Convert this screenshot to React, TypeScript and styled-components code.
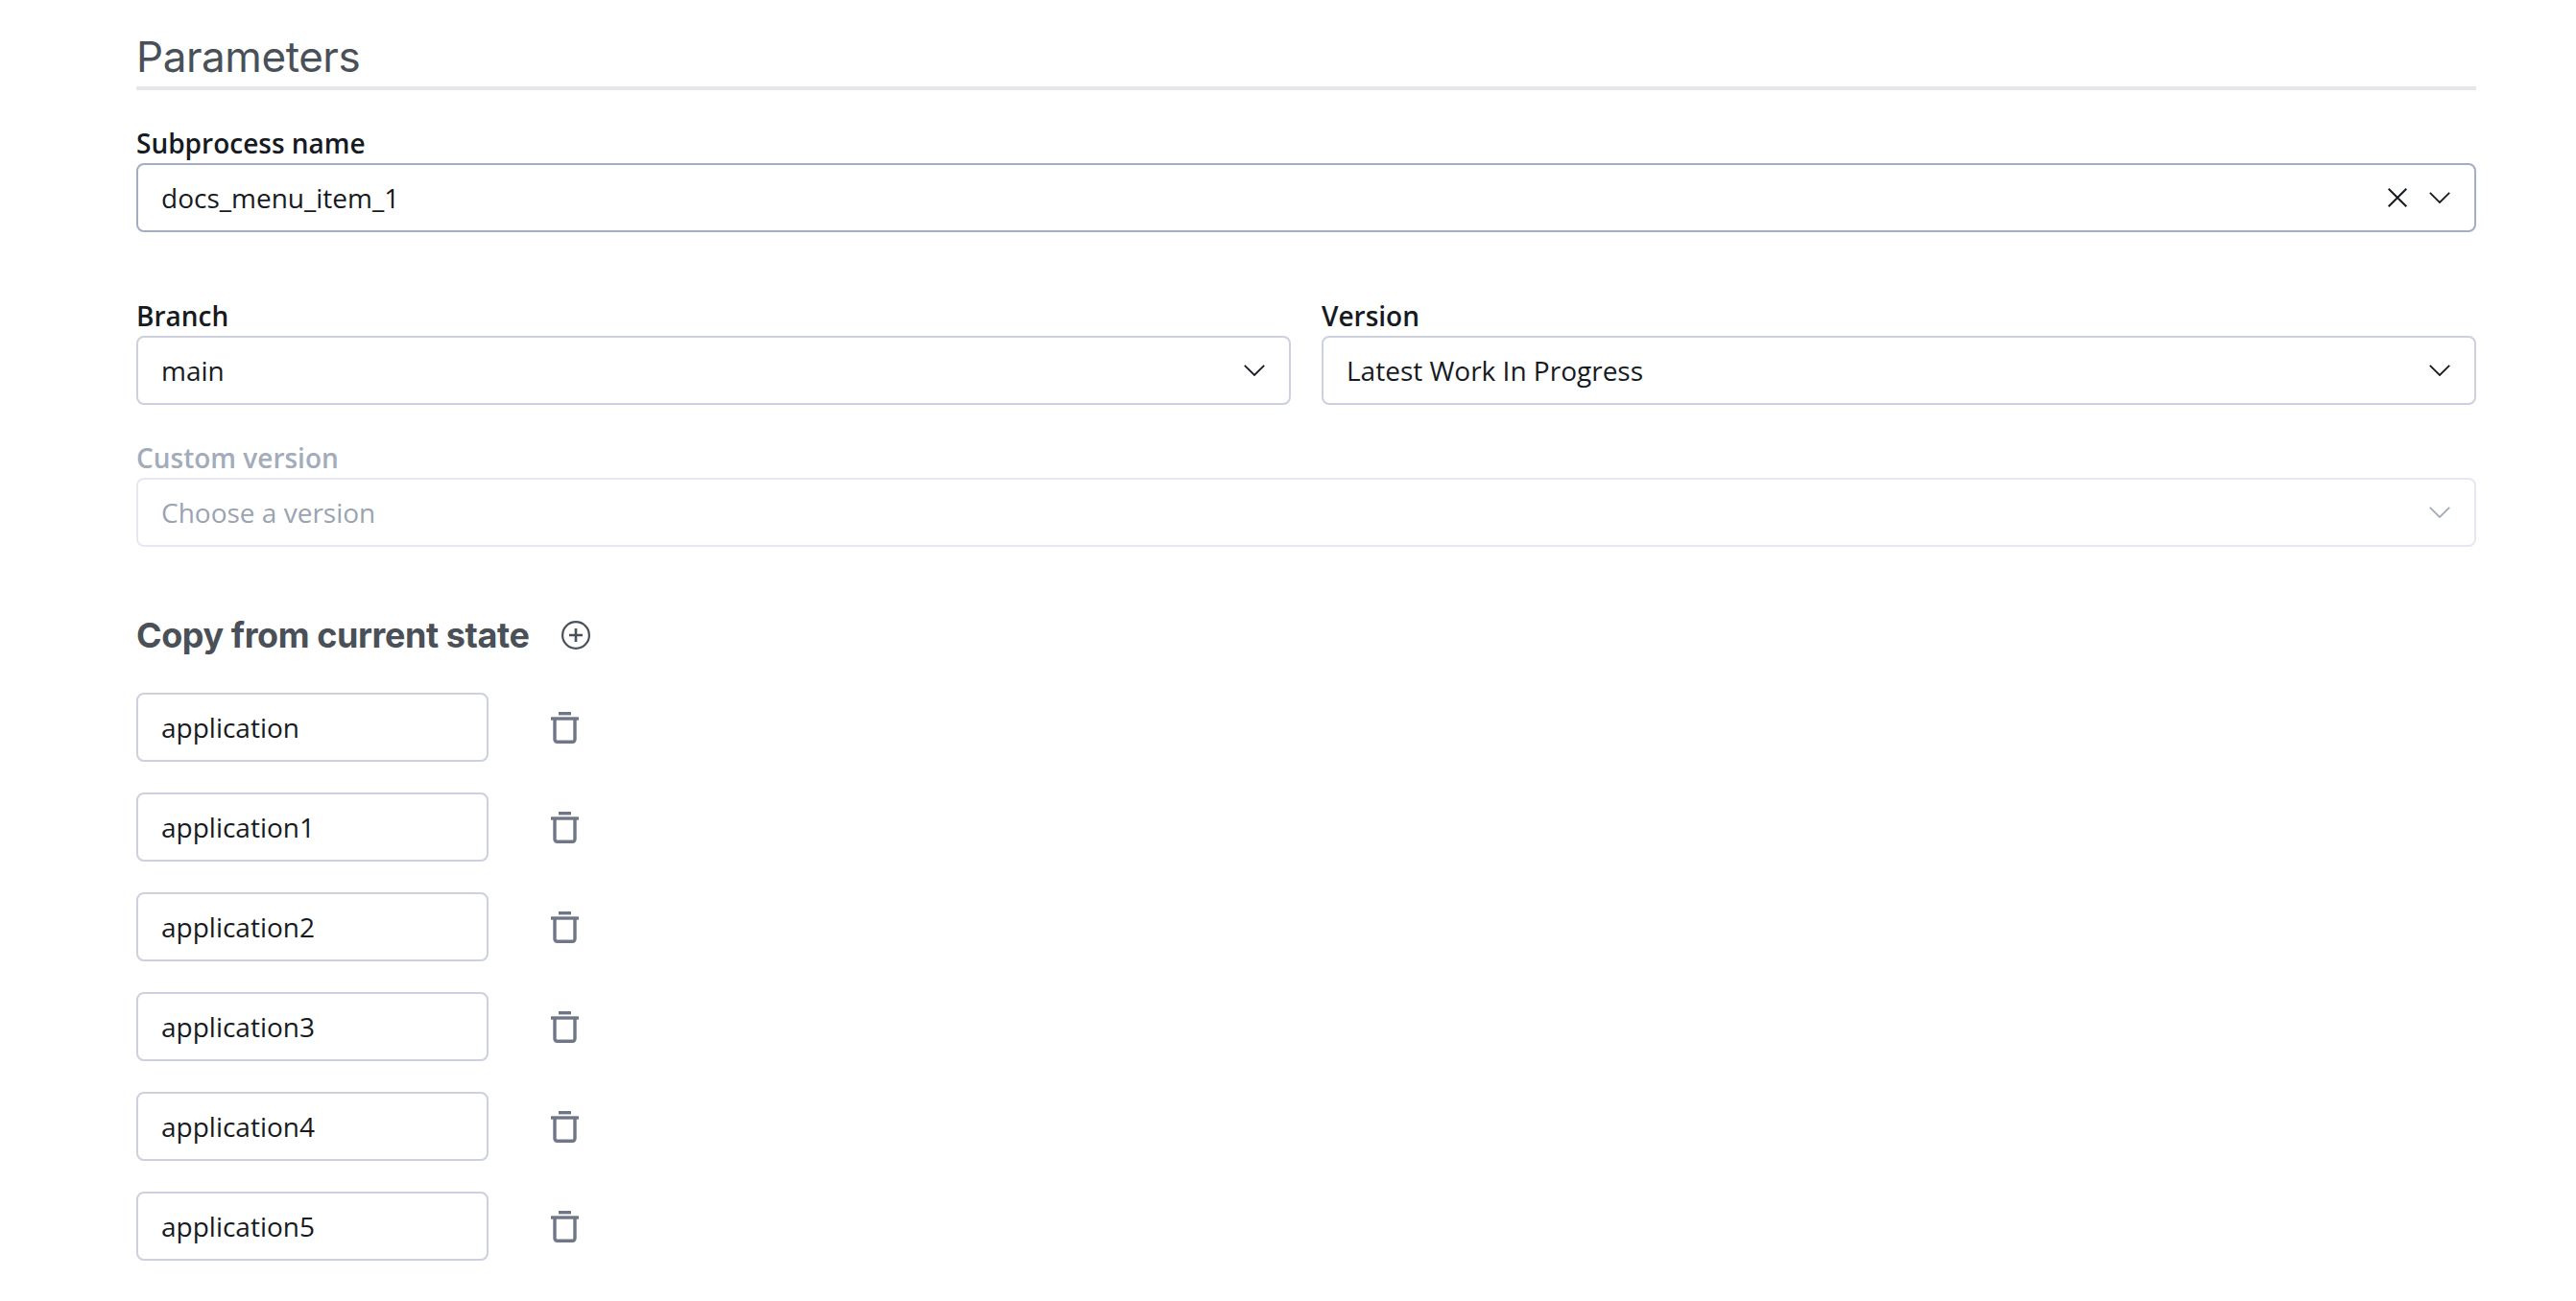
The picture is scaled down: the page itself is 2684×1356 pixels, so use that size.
import React from "react";
import styled, { createGlobalStyle } from "styled-components";

const Global = createGlobalStyle`
  html, body { margin: 0; padding: 0; background: #fff; }
`;

const Page = styled.div`
  width: 2684px;
  height: 1356px;
  box-sizing: border-box;
  padding: 27px 104px 0 142px;
  font-family: "Open Sans", "Liberation Sans", sans-serif;
  overflow: hidden;
`;

const Heading = styled.h2`
  margin: 0;
  height: 63px;
  line-height: 64px;
  font-family: Inter, sans-serif;
  font-size: 44px;
  font-weight: 400;
  letter-spacing: -0.44px;
  color: #4a5058;
  border-bottom: 4px solid #e5e7eb;
`;

const Field = styled.div<{ $top: number }>`
  margin-top: ${(p) => p.$top}px;
  display: flex;
  flex-direction: column;
  flex: 1 1 0;
  min-width: 0;
`;

const Label = styled.label<{ $disabled?: boolean }>`
  font-size: 28px;
  font-weight: 600;
  line-height: 38px;
  margin-bottom: 2px;
  color: ${(p) => (p.$disabled ? "#a3acba" : "#161b22")};
`;

const Select = styled.div<{ $state?: "focus" | "disabled" }>`
  height: 72px;
  box-sizing: border-box;
  display: flex;
  align-items: center;
  padding: 0 25px 0 24px;
  gap: 23px;
  background: #fff;
  border: 2px solid
    ${(p) => (p.$state === "focus" ? "#a3aec0" : p.$state === "disabled" ? "#e5e8ef" : "#cdd0df")};
  border-radius: 8px;
  font-size: 28px;
  color: ${(p) => (p.$state === "disabled" ? "#9aa3b2" : "#161b22")};
`;

const Value = styled.span`
  flex: 1;
`;

const Columns = styled.div`
  display: flex;
  gap: 32px;
`;

const SectionHead = styled.div`
  display: flex;
  align-items: center;
  margin-top: 68px;
  height: 48px;
  gap: 34px;
`;

const SectionTitle = styled.h3`
  margin: 0;
  font-family: Inter, sans-serif;
  font-size: 36px;
  font-weight: 700;
  letter-spacing: -0.42px;
  color: #4a5058;
`;

const List = styled.div`
  margin-top: 36px;
  display: flex;
  flex-direction: column;
  gap: 32px;
`;

const Row = styled.div`
  display: flex;
  align-items: center;
  gap: 65px;
`;

const TextBox = styled(Select)`
  width: 367px;
`;

const Icon = styled.svg<{ $w: number; $h: number; $c: string }>`
  width: ${(p) => p.$w}px;
  height: ${(p) => p.$h}px;
  color: ${(p) => p.$c};
  flex: none;
  display: block;
`;

const Chevron = ({ color = "#161b22" }: { color?: string }) => (
  <Icon $w={22} $h={12} $c={color} viewBox="0 0 22 12" fill="none" stroke="currentColor" strokeWidth="1.8">
    <path d="M0.8 0.8 11 11 21.2 0.8" />
  </Icon>
);

const Cross = () => (
  <Icon $w={20} $h={20} $c="#161b22" viewBox="0 0 20 20" fill="none" stroke="currentColor" strokeWidth="2">
    <path d="M0.7 0.7 19.3 19.3M19.3 0.7 0.7 19.3" />
  </Icon>
);

const Plus = () => (
  <Icon $w={30} $h={30} $c="#4a5058" viewBox="0 0 30 30" fill="none" stroke="currentColor" strokeWidth="2.2">
    <circle cx="15" cy="15" r="13.9" />
    <path d="M15 8v14M8 15h14" strokeWidth="2.6" />
  </Icon>
);

const Trash = () => (
  <Icon $w={29} $h={33} $c="#6f7687" viewBox="0 0 29 33" fill="none" stroke="currentColor" strokeWidth="3.4">
    <path d="M8 1.7h13" />
    <path d="M0 7h29" />
    <path d="M4 8v20.8a2.5 2.5 0 0 0 2.5 2.5h16a2.5 2.5 0 0 0 2.5-2.5V8" />
  </Icon>
);

const items = ["application", "application1", "application2", "application3", "application4", "application5"];

export default function App() {
  return (
    <Page>
      <Global />
      <Heading>Parameters</Heading>
      <Field $top={36}>
        <Label>Subprocess name</Label>
        <Select $state="focus">
          <Value>docs_menu_item_1</Value>
          <Cross />
          <Chevron />
        </Select>
      </Field>
      <Columns>
        <Field $top={68}>
          <Label>Branch</Label>
          <Select>
            <Value>main</Value>
            <Chevron />
          </Select>
        </Field>
        <Field $top={68}>
          <Label>Version</Label>
          <Select>
            <Value>Latest Work In Progress</Value>
            <Chevron />
          </Select>
        </Field>
      </Columns>
      <Field $top={36}>
        <Label $disabled>Custom version</Label>
        <Select $state="disabled">
          <Value>Choose a version</Value>
          <Chevron color="#a3acba" />
        </Select>
      </Field>
      <SectionHead>
        <SectionTitle>Copy from current state</SectionTitle>
        <Plus />
      </SectionHead>
      <List>
        {items.map((t) => (
          <Row key={t}>
            <TextBox>{t}</TextBox>
            <Trash />
          </Row>
        ))}
      </List>
    </Page>
  );
}
